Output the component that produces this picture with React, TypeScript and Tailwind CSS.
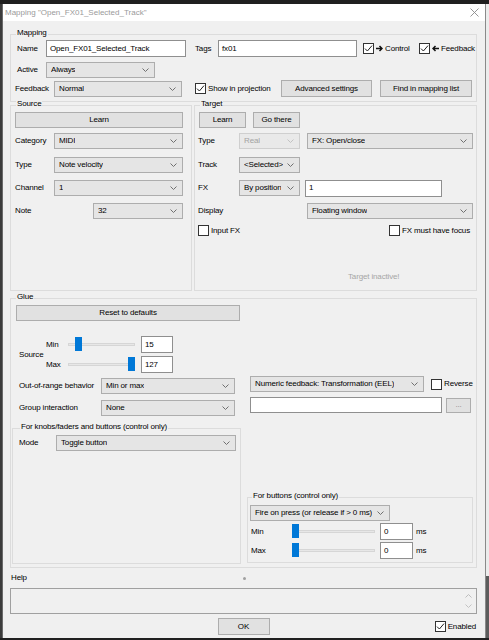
import React from 'react';

type Box = { className?: string; children?: React.ReactNode };

const Chevron = ({ light }: { light?: boolean }) => (
  <svg width="7" height="4" viewBox="0 0 7 4" className="shrink-0">
    <path d="M0.5 0.5 L3.5 3.5 L6.5 0.5" fill="none" stroke={light ? '#c2c2c2' : '#707070'} strokeWidth="1" />
  </svg>
);

const Combo = ({ className = '', text, disabled }: { className?: string; text: string; disabled?: boolean }) =>
  disabled ? (
    <div className={`flex h-[16px] shrink-0 items-center justify-between border border-[#cfcfcf] bg-[#e9e9e9] pl-[4px] pr-[5px] text-[#a3a3a3] ${className}`}>
      <span className="truncate">{text}</span>
      <Chevron light />
    </div>
  ) : (
    <div className={`flex h-[16px] shrink-0 items-center justify-between border border-[#adadad] bg-[#e5e5e5] pl-[4px] pr-[5px] ${className}`}>
      <span className="truncate">{text}</span>
      <Chevron />
    </div>
  );

const TextBox = ({ className = '', children }: Box) => (
  <div className={`flex shrink-0 items-center border border-[#8f8f8f] bg-white pl-[3px] ${className}`}>{children}</div>
);

const Button = ({ className = '', children }: Box) => (
  <div className={`flex shrink-0 items-center justify-center border border-[#adadad] bg-[#e1e1e1] ${className}`}>{children}</div>
);

const Check = ({ checked }: { checked?: boolean }) => (
  <span className="flex h-[11px] w-[11px] shrink-0 items-center justify-center border border-[#333] bg-white">
    {checked && (
      <svg width="9" height="9" viewBox="0 0 9 9">
        <path d="M1 4.6 L3.4 7 L8 1.6" fill="none" stroke="#222" strokeWidth="1" />
      </svg>
    )}
  </span>
);

const Arrow = ({ left }: { left?: boolean }) => (
  <svg width="7" height="7" viewBox="0 0 7 7" className="mx-[2px] shrink-0">
    {left ? (
      <path d="M7 3.5 H1.5 M3.5 1 L1 3.5 L3.5 6" fill="none" stroke="#111" strokeWidth="1.5" />
    ) : (
      <path d="M0 3.5 H5.5 M3.5 1 L6 3.5 L3.5 6" fill="none" stroke="#111" strokeWidth="1.5" />
    )}
  </svg>
);

// slider: thin trough with a blue thumb; pos is the thumb offset in px
const Slider = ({ className = '', pos, trackRight }: { className?: string; pos: number; trackRight: number }) => (
  <div className={`relative h-[17px] shrink-0 ${className}`}>
    <div className="absolute left-[1px] top-[7px] h-[3px] border border-[#d6d6d6] bg-[#e7e7e7]" style={{ right: trackRight }} />
    <div className="absolute top-[1px] h-[14px] w-[7px] bg-[#0078d7]" style={{ left: pos }} />
  </div>
);

const Group = ({ title, className = '', legend = 'ml-[5px]', children }: Box & { title: string; legend?: string }) => (
  <div className={`shrink-0 border border-[#dcdcdc] ${className}`}>
    <div className={`-mt-[7px] h-[10px] w-fit bg-[#f0f0f0] px-[1px] leading-[10px] ${legend}`}>{title}</div>
    {children}
  </div>
);

const Row = ({ className = '', children }: Box) => (
  <div className={`flex shrink-0 items-center ${className}`}>{children}</div>
);

export default function App() {
  return (
    <div className="flex h-[640px] w-[489px] flex-col overflow-hidden bg-[#202020] font-['Liberation_Sans',Arial,sans-serif] text-[8px] tracking-[-0.15px] text-black">
      <div className="h-[4px] shrink-0" />
      <div className="flex h-[634px] shrink-0">
        <div className="w-[3px] shrink-0 border-r border-[#6a6a6a] bg-[#3c3c3c]" />

        <div className="flex w-[482px] shrink-0 flex-col">
          {/* title bar */}
          <div className="flex h-[17px] shrink-0 items-center justify-between bg-white pl-[2px] pr-[6px]">
            <span className="tracking-normal text-[#9a9a9a]">Mapping "Open_FX01_Selected_Track"</span>
            <svg width="9" height="9" viewBox="0 0 9 9">
              <path d="M0.5 0.5 L8.5 8.5 M8.5 0.5 L0.5 8.5" stroke="#8a8a8a" strokeWidth="0.9" />
            </svg>
          </div>

          <div className="flex flex-1 flex-col bg-[#f0f0f0] pl-[7px]">
            {/* Mapping */}
            <Group title="Mapping" className="mt-[13px] h-[68px] w-[467px]">
              <Row className="mt-[2px] h-[17px]">
                <span className="w-[35px] shrink-0 pl-[6px]">Name</span>
                <TextBox className="h-[17px] w-[140px]">Open_FX01_Selected_Track</TextBox>
                <span className="w-[32px] shrink-0 pl-[9px]">Tags</span>
                <TextBox className="h-[17px] w-[139px]">fx01</TextBox>
                <div className="ml-[6px] flex w-[56px] shrink-0 items-center">
                  <Check checked />
                  <Arrow />
                  <span>Control</span>
                </div>
                <div className="flex items-center">
                  <Check checked />
                  <Arrow left />
                  <span>Feedback</span>
                </div>
              </Row>
              <Row className="mt-[5px] h-[16px]">
                <span className="w-[35px] shrink-0 pl-[6px]">Active</span>
                <Combo className="w-[109px]" text="Always" />
              </Row>
              <Row className="mt-[2px] h-[17px]">
                <span className="w-[43px] shrink-0 pl-[4px]">Feedback</span>
                <Combo className="w-[128px]" text="Normal" />
                <div className="ml-[13px] flex w-[86px] shrink-0 items-center">
                  <Check checked />
                  <span className="ml-[2px]">Show in projection</span>
                </div>
                <Button className="h-[17px] w-[91px]">Advanced settings</Button>
                <Button className="ml-[8px] h-[17px] w-[92px]">Find in mapping list</Button>
              </Row>
            </Group>

            {/* Source / Target */}
            <div className="mt-[3px] flex shrink-0 gap-[2px]">
              <Group title="Source" className="h-[186px] w-[182px]">
                <Button className="ml-[4px] mt-[3px] h-[16px] w-[168px]">Learn</Button>
                <Row className="mt-[5px] h-[16px]">
                  <span className="w-[43px] shrink-0 pl-[4px]">Category</span>
                  <Combo className="w-[129px]" text="MIDI" />
                </Row>
                <Row className="mt-[8px] h-[16px]">
                  <span className="w-[43px] shrink-0 pl-[4px]">Type</span>
                  <Combo className="w-[129px]" text="Note velocity" />
                </Row>
                <Row className="mt-[7px] h-[16px]">
                  <span className="w-[43px] shrink-0 pl-[4px]">Channel</span>
                  <Combo className="w-[129px]" text="1" />
                </Row>
                <Row className="mt-[7px] h-[16px]">
                  <span className="w-[82px] shrink-0 pl-[4px]">Note</span>
                  <Combo className="w-[90px]" text="32" />
                </Row>
              </Group>

              <Group title="Target" className="h-[186px] w-[283px]">
                <Row className="mt-[3px] h-[16px]">
                  <Button className="ml-[4px] h-[16px] w-[47px]">Learn</Button>
                  <Button className="ml-[7px] h-[16px] w-[47px]">Go there</Button>
                </Row>
                <Row className="mt-[5px] h-[16px]">
                  <span className="w-[44px] shrink-0 pl-[3px]">Type</span>
                  <Combo className="w-[61px]" text="Real" disabled />
                  <Combo className="ml-[7px] w-[166px]" text="FX: Open/close" />
                </Row>
                <Row className="mt-[8px] h-[16px]">
                  <span className="w-[44px] shrink-0 pl-[3px]">Track</span>
                  <Combo className="w-[61px]" text="<Selected>" />
                </Row>
                <Row className="mt-[7px] h-[16px]">
                  <span className="w-[44px] shrink-0 pl-[3px]">FX</span>
                  <Combo className="w-[61px]" text="By position" />
                  <TextBox className="ml-[5px] h-[17px] w-[137px]">1</TextBox>
                </Row>
                <Row className="mt-[7px] h-[16px]">
                  <span className="w-[112px] shrink-0 pl-[3px]">Display</span>
                  <Combo className="w-[166px]" text="Floating window" />
                </Row>
                <Row className="mt-[6px] h-[11px] justify-between pl-[3px] pr-[6px]">
                  <div className="flex items-center">
                    <Check />
                    <span className="ml-[2px]">Input FX</span>
                  </div>
                  <div className="flex items-center">
                    <Check />
                    <span className="ml-[2px]">FX must have focus</span>
                  </div>
                </Row>
                <div className="ml-[153px] mt-[36px] h-[10px] leading-[10px] text-[#a6a6a6]">Target inactive!</div>
              </Group>
            </div>

            {/* Glue */}
            <Group title="Glue" className="mt-[7px] h-[270px] w-[467px]">
              <Button className="ml-[5px] mt-[3px] h-[16px] w-[224px]">Reset to defaults</Button>
              <div className="flex">
                <div className="flex w-[230px] shrink-0 flex-col">
                  <div className="mt-[15px] flex">
                    <span className="w-[35px] shrink-0 self-center pl-[8px]">Source</span>
                    <div className="flex flex-col gap-[3px]">
                      <Row className="h-[17px]">
                        <span className="w-[21px] shrink-0">Min</span>
                        <Slider className="w-[72px]" pos={8} trackRight={4} />
                        <TextBox className="ml-[2px] h-[17px] w-[32px]">15</TextBox>
                      </Row>
                      <Row className="h-[17px]">
                        <span className="w-[21px] shrink-0">Max</span>
                        <Slider className="w-[72px]" pos={61} trackRight={4} />
                        <TextBox className="ml-[2px] h-[17px] w-[32px]">127</TextBox>
                      </Row>
                    </div>
                  </div>
                  <Row className="mt-[5px] h-[16px]">
                    <span className="w-[90px] shrink-0 pl-[8px]">Out-of-range behavior</span>
                    <Combo className="w-[134px]" text="Min or max" />
                  </Row>
                  <Row className="mt-[6px] h-[16px]">
                    <span className="w-[90px] shrink-0 pl-[8px]">Group interaction</span>
                    <Combo className="w-[134px]" text="None" />
                  </Row>
                  <Group
                    title="For knobs/faders and buttons (control only)"
                    legend="ml-[7px]"
                    className="ml-[1px] mt-[12px] h-[136px] w-[229px]"
                  >
                    <Row className="mt-[3px] h-[16px]">
                      <span className="w-[43px] shrink-0 pl-[6px]">Mode</span>
                      <Combo className="w-[180px]" text="Toggle button" />
                    </Row>
                  </Group>
                </div>

                <div className="ml-[5px] flex w-[229px] shrink-0 flex-col">
                  <Row className="mt-[55px] h-[16px]">
                    <Combo className="ml-[4px] w-[174px]" text="Numeric feedback: Transformation (EEL)" />
                    <span className="ml-[7px]">
                      <Check />
                    </span>
                    <span className="ml-[2px]">Reverse</span>
                  </Row>
                  <Row className="mt-[5px] h-[16px]">
                    <TextBox className="ml-[4px] h-[16px] w-[192px]" />
                    <Button className="ml-[4px] h-[15px] w-[25px] text-[#8a8a8a]">...</Button>
                  </Row>
                  <Group title="For buttons (control only)" legend="ml-[4px]" className="ml-[1px] mt-[84px] h-[66px] w-[226px]">
                    <Combo className="ml-[2px] mt-[4px] w-[140px]" text="Fire on press (or release if > 0 ms)" />
                    <Row className="mt-[2px] h-[17px]">
                      <span className="w-[44px] shrink-0 pl-[3px]">Min</span>
                      <Slider className="w-[84px]" pos={0} trackRight={1} />
                      <TextBox className="ml-[4px] h-[17px] w-[33px]">0</TextBox>
                      <span className="ml-[3px]">ms</span>
                    </Row>
                    <Row className="mt-[2px] h-[17px]">
                      <span className="w-[44px] shrink-0 pl-[3px]">Max</span>
                      <Slider className="w-[84px]" pos={0} trackRight={1} />
                      <TextBox className="ml-[4px] h-[17px] w-[33px]">0</TextBox>
                      <span className="ml-[3px]">ms</span>
                    </Row>
                  </Group>
                </div>
              </div>
            </Group>

            {/* Help + footer */}
            <Row className="mt-[5px] h-[10px]">
              <span className="w-[233px] shrink-0 pl-[1px]">Help</span>
              <span className="h-[3px] w-[3px] rounded-full bg-[#a0a0a0]" />
            </Row>
            <div className="mt-[5px] flex h-[26px] w-[467px] shrink-0 justify-end border border-[#a0a0a0] bg-[#f0f0f0]">
              <div className="flex w-[16px] flex-col items-center justify-between py-[5px]">
                <svg width="7" height="4" viewBox="0 0 7 4">
                  <path d="M0.5 3.5 L3.5 0.5 L6.5 3.5" fill="none" stroke="#bdbdbd" strokeWidth="1" />
                </svg>
                <Chevron light />
              </div>
            </div>
            <div className="mt-[4px] grid h-[17px] w-[467px] shrink-0 grid-cols-[1fr_52px_1fr] items-center">
              <div />
              <Button className="h-[17px]">OK</Button>
              <div className="flex items-center justify-end pr-[1px]">
                <Check checked />
                <span className="ml-[2px]">Enabled</span>
              </div>
            </div>
          </div>
        </div>

        <div className="flex w-[4px] shrink-0 flex-col border-l border-[#8a8a8a]">
          <div className="flex-1 bg-[#ececec]" />
          <div className="h-[62px] bg-[#5c5c5c]" />
        </div>
      </div>
    </div>
  );
}
